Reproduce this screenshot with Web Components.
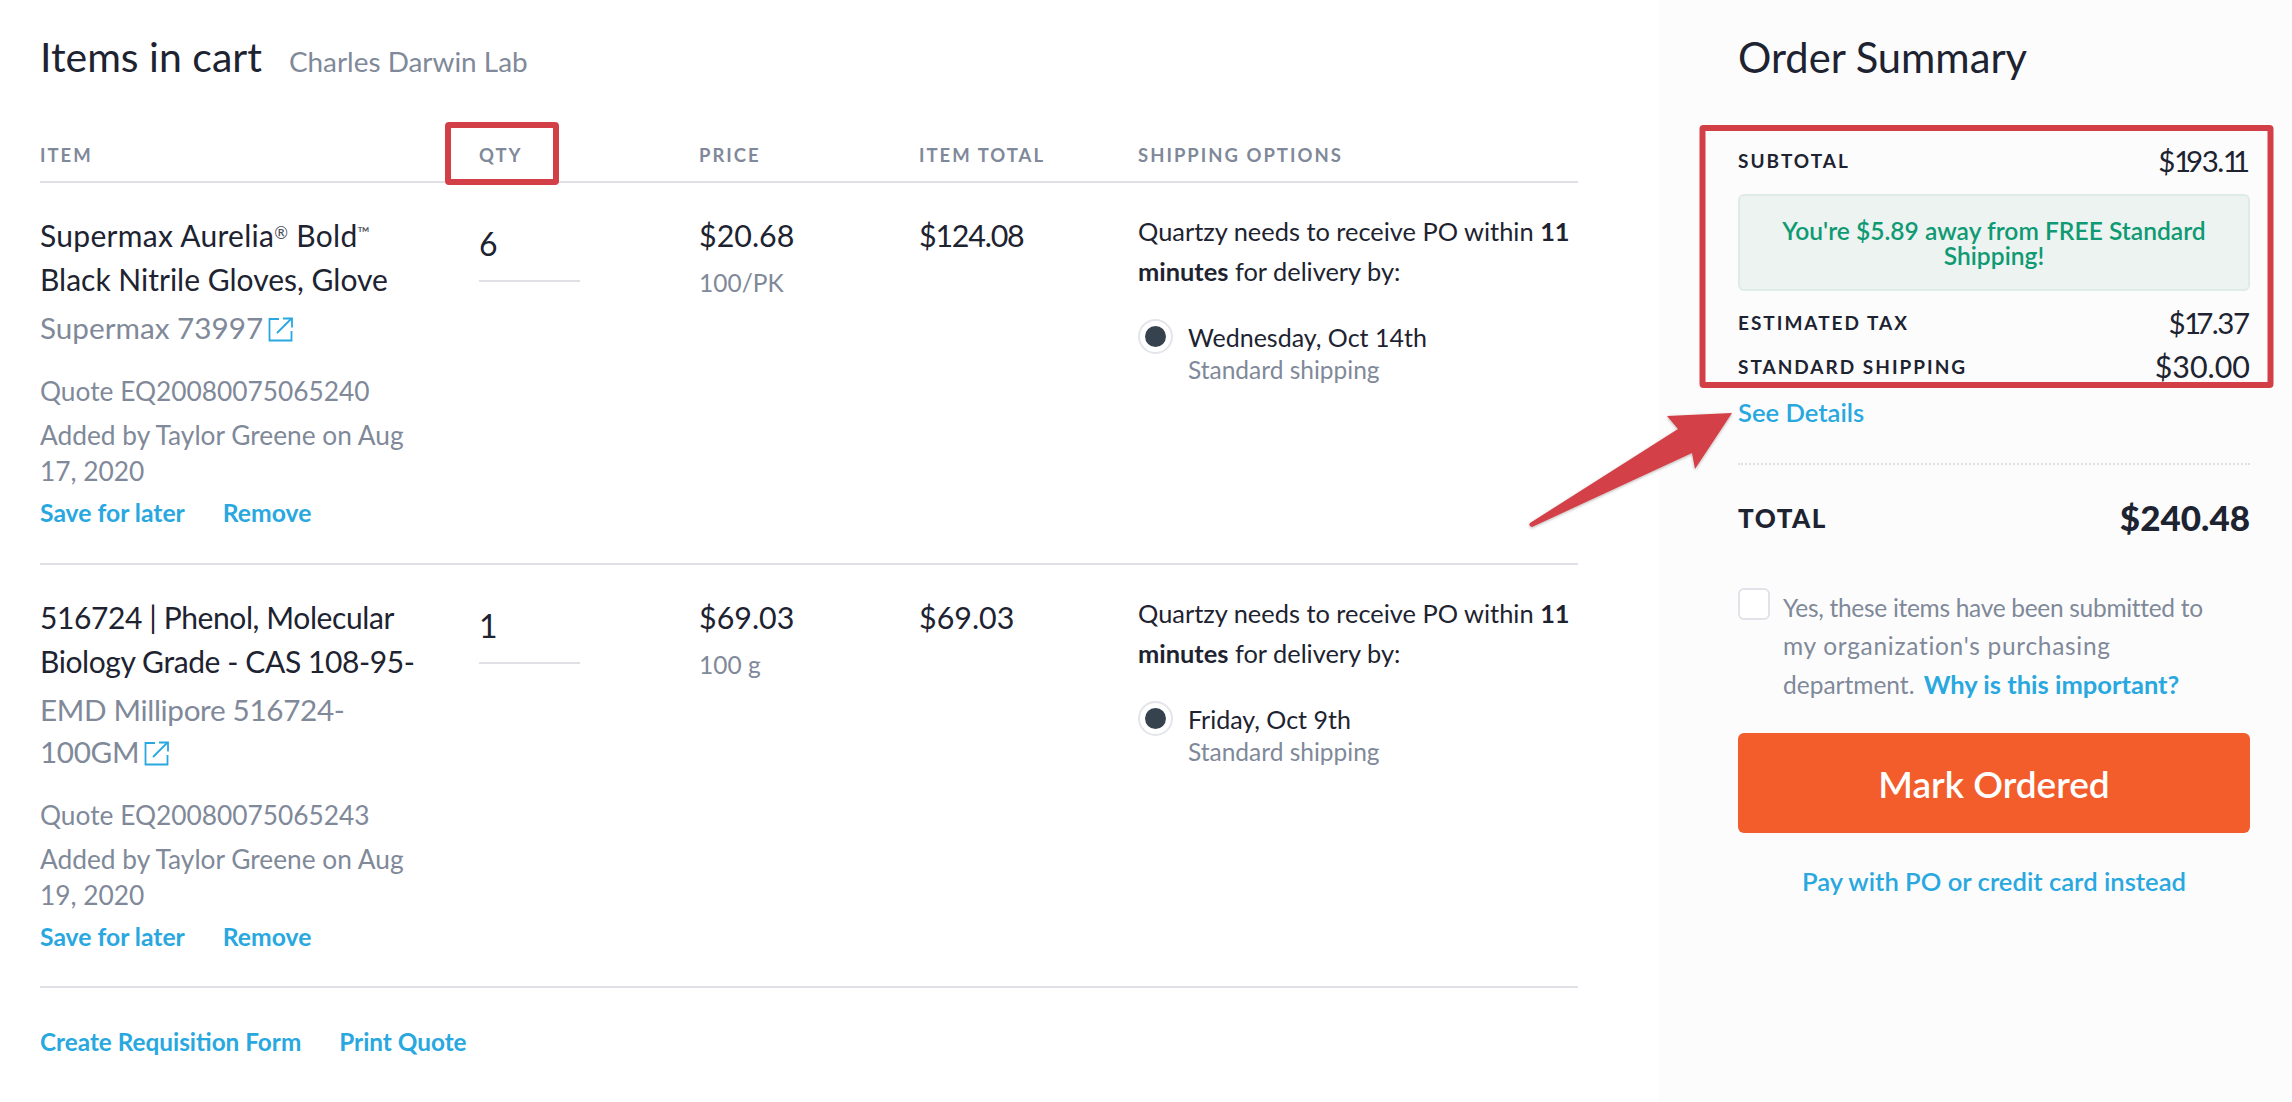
<!DOCTYPE html>
<html>
<head>
<meta charset="utf-8">
<style>
  html, body { margin: 0; padding: 0; height: 100%; background: #fff; }
  body { font-family: 'Lato', 'Liberation Sans', sans-serif; color: #1d2330; }
  sup { font-size: 55%; line-height: 0; vertical-align: 8px; color: #4a505c; }
</style>
</head>
<body>
<cart-page>
  <cart-items slot="main">
    <cart-row
      qty="6" price="$20.68" unit="100/PK" total="$124.08" total-spacing="-1.2px"
      quote="Quote EQ20080075065240" added="17, 2020"
      date="Wednesday, Oct 14th">
      <span slot="title"><span style="letter-spacing:.3px">Supermax Aurelia<sup>®</sup> Bold<sup>™</sup></span><br>Black Nitrile Gloves, Glove</span>
      <span slot="vendor">Supermax 73997</span>
    </cart-row>
    <cart-row style="padding-bottom:34px"
      qty="1" price="$69.03" unit="100 g" total="$69.03"
      quote="Quote EQ20080075065243" added="19, 2020"
      date="Friday, Oct 9th">
      <span slot="title" style="letter-spacing:-.4px">516724 | Phenol, Molecular<br>Biology Grade - CAS 108-95-</span>
      <span slot="vendor" style="letter-spacing:-.35px">EMD Millipore 516724-<br>100GM</span>
    </cart-row>
  </cart-items>
  <order-summary slot="side"></order-summary>
</cart-page>
<markup-layer></markup-layer>

<script>
const linkBlue = '#29a8e0';
const grey = '#7f8999';

class CartPage extends HTMLElement {
  constructor() {
    super();
    this.attachShadow({ mode: 'open' }).innerHTML = `
    <style>
      :host { display: flex; height: 1102px; overflow: hidden; }
      .main { width: 1659px; box-sizing: border-box; padding: 0 81px 0 40px; }
      .side { width: 633px; box-sizing: border-box; background: #fcfcfd; padding: 0 42px 0 79px; }
    </style>
    <div class="main"><slot name="main"></slot></div>
    <div class="side"><slot name="side"></slot></div>`;
  }
}

class CartItems extends HTMLElement {
  constructor() {
    super();
    this.attachShadow({ mode: 'open' }).innerHTML = `
    <style>
      :host { display: block; }
      .title { display: flex; align-items: baseline; gap: 27px; height: 122px; box-sizing: border-box; padding-top: 28px; }
      h1 { margin: 0; font-size: 41px; font-weight: 400; line-height: 58px; }
      .lab { font-size: 27.9px; color: ${grey}; }
      .head { display: grid; grid-template-columns: 439px 220px 220px 219px 1fr; height: 61px; align-items: center;
              padding-top: 6px; box-sizing: border-box; border-bottom: 2px solid #dfe1e7; }
      .head span { font-size: 18.5px; font-weight: 700; letter-spacing: 2px; color: ${grey}; }
      .foot { display: flex; gap: 38px; padding-top: 39px; }
      .foot a { color: ${linkBlue}; font-size: 24.3px; font-weight: 700; line-height: 30px; }
    </style>
    <div class="title"><h1>Items in cart</h1><span class="lab">Charles Darwin Lab</span></div>
    <div class="head"><span>ITEM</span><span>QTY</span><span>PRICE</span><span>ITEM TOTAL</span><span>SHIPPING OPTIONS</span></div>
    <slot></slot>
    <div class="foot"><a>Create Requisition Form</a><a>Print Quote</a></div>`;
  }
}

class CartRow extends HTMLElement {
  connectedCallback() {
    const a = n => this.getAttribute(n);
    this.attachShadow({ mode: 'open' }).innerHTML = `
    <style>
      :host { display: grid; grid-template-columns: 439px 220px 220px 219px 1fr;
              padding: 30px 0 35px; border-bottom: 2px solid #dfe1e7; }
      .name { font-size: 30px; line-height: 44px; white-space: nowrap; }
      .vendor { margin-top: 6px; font-size: 29.7px; line-height: 42px; color: ${grey}; white-space: nowrap; }
      .vendor svg { vertical-align: -3px; margin-left: 5px; }
      .meta { font-size: 26.3px; color: ${grey}; line-height: 36px; white-space: nowrap; }
      .quote { margin-top: 24px; }
      .added { margin-top: 8px; }
      .links { display: flex; gap: 38px; margin-top: 9px; }
      .links a { color: ${linkBlue}; font-size: 24.7px; font-weight: 700; line-height: 30px; }
      .qty { font-size: 32px; line-height: 44px; padding-top: 10px; width: 101px; height: 58px; box-sizing: content-box; border-bottom: 2px solid #dfe1e7; margin-top: -1px; }
      .price { font-size: 30.4px; line-height: 44px; }
      .unit { font-size: 24.5px; line-height: 44px; margin-top: 4px; color: ${grey}; }
      .ship { font-size: 25.4px; line-height: 40px; margin-top: -2px; white-space: nowrap; }
      .ship b { font-weight: 700; }
      .opt { display: flex; gap: 15px; margin-top: 28px; }
      .radio { width: 31px; height: 31px; border: 2px solid #e3e5ea; border-radius: 50%; background: #fff;
               display: flex; align-items: center; justify-content: center; flex: none; }
      .radio i { width: 21px; height: 21px; background: #36434f; border-radius: 50%; }
      .date { font-size: 25px; line-height: 36px; }
      .std { font-size: 24.5px; line-height: 30px; color: ${grey}; }
    </style>
    <div>
      <div class="name"><slot name="title"></slot></div>
      <div class="vendor"><slot name="vendor"></slot><svg width="25" height="25" viewBox="0 0 25 25" fill="none" stroke="${linkBlue}" stroke-width="1.8"><path d="M11 2H1.500v21.500h22V14"/><path d="M9 16L23.500 1.500"/><path d="M15 1.500h9v9"/></svg></div>
      <div class="meta quote">${a('quote')}</div>
      <div class="meta added">Added by Taylor Greene on Aug<br>${a('added')}</div>
      <div class="links"><a>Save for later</a><a>Remove</a></div>
    </div>
    <div><div class="qty">${a('qty')}</div></div>
    <div><div class="price">${a('price')}</div><div class="unit">${a('unit')}</div></div>
    <div><div class="price" style="letter-spacing:${a('total-spacing') || 'normal'}">${a('total')}</div></div>
    <div>
      <div class="ship">Quartzy needs to receive PO within <b>11</b><br><b>minutes</b> for delivery by:</div>
      <div class="opt"><span class="radio"><i></i></span>
        <div><div class="date">${a('date')}</div><div class="std">Standard shipping</div></div>
      </div>
    </div>`;
  }
}

class OrderSummary extends HTMLElement {
  constructor() {
    super();
    this.attachShadow({ mode: 'open' }).innerHTML = `
    <style>
      :host { display: block; }
      h2 { margin: 0; padding-top: 28px; height: 138px; box-sizing: border-box; font-size: 41.7px; font-weight: 400; line-height: 58px; }
      .line { display: flex; justify-content: space-between; align-items: center; height: 44px; }
      .line span { font-size: 19px; font-weight: 700; letter-spacing: 2px; }
      .line b { font-size: 30.4px; font-weight: 400; }
      .line b.tight { font-size: 29.5px; letter-spacing: -1.5px; }
      .line b u { text-decoration: none; letter-spacing: -5px; }
      .line b em { font-style: normal; letter-spacing: -7px; }
      .line b > s, .line b > i { font-style: normal; text-decoration: none; letter-spacing: 0; }
      .free { margin: 12px 0 9px; height: 97px; box-sizing: border-box; background: #edf3f1; border: 2px solid #dfebe7; border-radius: 6px;
              display: flex; align-items: center; justify-content: center; text-align: center;
              color: #0f9a74; font-size: 24.6px; font-weight: 600; line-height: 25px; }
      .see { display: block; color: ${linkBlue}; font-size: 25.6px; font-weight: 600; line-height: 30px; margin-top: 9px; }
      .dots { border-top: 2px dotted #dcdfe4; margin-top: 36px; }
      .total { display: flex; justify-content: space-between; align-items: center; height: 104px; }
      .total span { font-size: 26px; font-weight: 900; letter-spacing: 1.5px; padding-top: 2px; }
      .total b { font-size: 35px; font-weight: 900; }
      .confirm { display: flex; gap: 13px; margin-top: 20px; font-size: 24.5px; line-height: 38px; color: ${grey}; white-space: nowrap; }
      .box { flex: none; width: 28px; height: 28px; margin-top: -1px; border: 2px solid #e1e3e9; border-radius: 6px; background: #fff; }
      .confirm a { color: ${linkBlue}; font-weight: 700; font-size: 25.5px; margin-left: 3px; }
      .btn { display: flex; align-items: center; justify-content: center; height: 100px; margin-top: 29px;
             background: #f35c2b; color: #fff; border-radius: 6px; font-size: 37px; font-weight: 600; }
      .alt { display: block; text-align: center; margin-top: 33px; color: ${linkBlue}; font-size: 25.6px; font-weight: 600; line-height: 30px; }
    </style>
    <h2>Order Summary</h2>
    <div class="line"><span>SUBTOTAL</span><b class="tight">$<u>1</u>93.<em>1</em><i>1</i></b></div>
    <div class="free"><div>You're $5.89 away from FREE Standard<br>Shipping!</div></div>
    <div class="line"><span>ESTIMATED TAX</span><b class="tight">$<u>1</u>7.3<i>7</i></b></div>
    <div class="line"><span>STANDARD SHIPPING</span><b>$30.00</b></div>
    <a class="see">See Details</a>
    <div class="dots"></div>
    <div class="total"><span>TOTAL</span><b>$240.48</b></div>
    <div class="confirm"><div class="box"></div><div><span style="letter-spacing:-.3px">Yes, these items have been submitted to</span><br><span style="letter-spacing:.7px">my organization's purchasing</span><br>department. <a>Why is this important?</a></div></div>
    <div class="btn">Mark Ordered</div>
    <a class="alt">Pay with PO or credit card instead</a>`;
  }
}

// red annotations drawn on top of the screenshot
class MarkupLayer extends HTMLElement {
  constructor() {
    super();
    this.attachShadow({ mode: 'open' }).innerHTML = `
    <style>
      :host { position: absolute; left: 0; top: 0; width: 2292px; height: 1102px; pointer-events: none; }
      svg { position: absolute; left: 0; top: 0; }
    </style>
    <svg width="2292" height="1102" viewBox="0 0 2292 1102">
      <defs><filter id="s" x="-10%" y="-10%" width="120%" height="120%"><feDropShadow dx="0" dy="1" stdDeviation="1.5" flood-color="#000" flood-opacity=".3"/></filter></defs>
      <rect x="448" y="125" width="108" height="57" rx="1" fill="none" stroke="#d33f47" stroke-width="6"/>
      <rect x="1702.500" y="128" width="568" height="257" rx="1" fill="none" stroke="#d33f47" stroke-width="6"/>
      <path filter="url(#s)" fill="#d33f47" d="M1732 413L1667 416L1678 429L1530 523Q1528 526 1532 527L1692 453L1695 469Z"/>
    </svg>`;
  }
}

customElements.define('cart-page', CartPage);
customElements.define('cart-items', CartItems);
customElements.define('cart-row', CartRow);
customElements.define('order-summary', OrderSummary);
customElements.define('markup-layer', MarkupLayer);
</script>
</body>
</html>
